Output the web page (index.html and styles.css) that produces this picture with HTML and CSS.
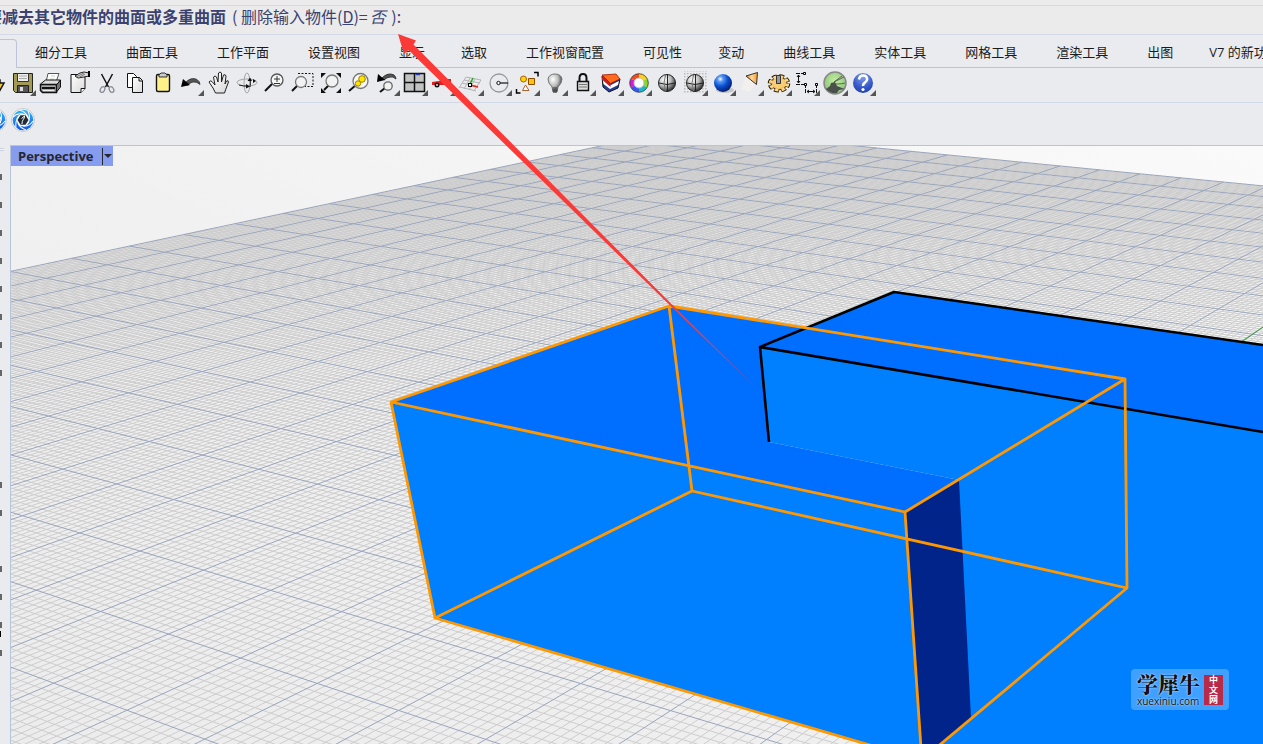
FILE: index.html
```
<!DOCTYPE html>
<html lang="zh-CN">
<head>
<meta charset="utf-8">
<title>Rhino - Perspective</title>
<link rel="stylesheet" href="styles.css">
</head>
<body>
<svg class="defs" width="0" height="0" aria-hidden="true">
  <defs>
    <radialGradient id="gray-ball" cx=".35" cy=".3" r=".75"><stop offset="0" stop-color="#fff"/><stop offset=".5" stop-color="#bdbdbd"/><stop offset="1" stop-color="#222"/></radialGradient>
    <radialGradient id="blue-ball" cx=".35" cy=".28" r=".75"><stop offset="0" stop-color="#fff"/><stop offset=".2" stop-color="#5b9bf5"/><stop offset=".55" stop-color="#0b4fd0"/><stop offset="1" stop-color="#021c66"/></radialGradient>
    <radialGradient id="help-ball" cx=".5" cy=".2" r=".9"><stop offset="0" stop-color="#7f9df0"/><stop offset=".6" stop-color="#3457c8"/><stop offset="1" stop-color="#1c3aa0"/></radialGradient>
    <radialGradient id="green-ball" cx=".5" cy=".4" r=".6"><stop offset="0" stop-color="#c3f0a0"/><stop offset="1" stop-color="#8cc27a"/></radialGradient>
    <linearGradient id="paper" x1="0" y1="0" x2="1" y2="1"><stop offset="0" stop-color="#fff"/><stop offset="1" stop-color="#d9d9d9"/></linearGradient>
    <linearGradient id="cone" x1="0" y1="0" x2="1" y2="0"><stop offset="0" stop-color="#f08a10"/><stop offset=".5" stop-color="#ffd9a0"/><stop offset="1" stop-color="#f59a20"/></linearGradient>
    <linearGradient id="swirl" x1="0" y1="0" x2="0" y2="1"><stop offset="0" stop-color="#35b8f5"/><stop offset="1" stop-color="#0b55ee"/></linearGradient>
    <linearGradient id="sky" x1="0" y1="1" x2="1" y2="0"><stop offset="0" stop-color="#ececec"/><stop offset=".5" stop-color="#f1f1f1"/><stop offset="1" stop-color="#fafafa"/></linearGradient>
    <pattern id="dots" width="3" height="3" patternUnits="userSpaceOnUse"><rect width="1.5" height="1.5" fill="#bbb"/></pattern>
    <symbol id="aperture" viewBox="0 0 24 24">
      <circle cx="12" cy="12" r="11.5" fill="#f6f6f6" stroke="#c8c8c8"/>
      <circle cx="12" cy="12" r="10.3" fill="url(#swirl)"/>
      <g stroke="#eef7ff" stroke-width="1.1" fill="none"><path d="M2 9Q6 5 12 6M8 2Q14 3 17 9M17 3Q20 9 17 15M22 13Q18 19 12 18M15 22Q9 20 7 15M5 20Q4 14 7 9"/></g>
      <circle cx="12" cy="12" r="6.3" fill="#fff"/>
      <path d="M9.500 7.300h5l3 4.700-3 4.700h-5l-3-4.700z" fill="#222b33"/>
      <path d="M11 16c-.5-4 3-5 2.500-8l-3 2.500" stroke="#fff" fill="none"/>
    </symbol>
  </defs>
</svg>

<header class="command">
  <label class="prompt" for="command-input">要减去其它物件的曲面或多重曲面</label>
  <span class="options">( <a href="#delete-input">删除输入物件(<u>D</u>)=<i>否</i></a> ):</span>
  <input class="command-input" id="command-input" type="text">
</header>

<nav class="tabs">
  <a class="tab active" href="#standard" aria-label="标准"></a>
  <a class="tab" href="#subd">细分工具</a>
  <a class="tab" href="#surface">曲面工具</a>
  <a class="tab" href="#cplane">工作平面</a>
  <a class="tab" href="#view">设置视图</a>
  <a class="tab short" href="#display">显示</a>
  <a class="tab" href="#select">选取</a>
  <a class="tab" href="#layout">工作视窗配置</a>
  <a class="tab short" href="#visibility">可见性</a>
  <a class="tab" href="#transform">变动</a>
  <a class="tab" href="#curve">曲线工具</a>
  <a class="tab" href="#solid">实体工具</a>
  <a class="tab" href="#mesh">网格工具</a>
  <a class="tab" href="#render">渲染工具</a>
  <a class="tab short" href="#drafting">出图</a>
  <a class="tab" href="#v7">V7 的新功能</a>
</nav>

<div class="toolbar" role="toolbar" aria-label="标准">
  <button class="tool" aria-label="打开"><svg viewBox="0 0 28 28"><path d="M3 7h7l2 3h7v3h4l-5 9H3z" fill="#f4c53a" stroke="#111" stroke-width="1.5"/></svg></button>
  <button class="tool menu" aria-label="保存"><svg viewBox="0 0 28 28"><path d="M4.500 3.500h19v19h-17l-2-2z" fill="#a39a55" stroke="#222"/><path d="M8.500 3.500h11v8h-11z" fill="#eee" stroke="#333"/><path d="M10 6h8M10 8.500h8" stroke="#aaa"/><path d="M8.500 15.500h11v7h-11z" fill="#555" stroke="#222"/><path d="M11 17h3v4h-3z" fill="#ddd"/></svg></button>
  <button class="tool" aria-label="打印"><svg viewBox="0 0 28 28"><path d="M9 12l2-8.500h11l-3 8.500" fill="#fff" stroke="#555"/><path d="M14 6h4M13 9h4" stroke="#ccc"/><path d="M3.500 14l5-4h15l-4 5h-16z" fill="#ddd" stroke="#111"/><path d="M3.500 14.500h16v8h-14l-2-2z" fill="#aaa" stroke="#111" stroke-width="1.500"/><path d="M19.500 15l4-5v7l-4 5z" fill="#777" stroke="#111"/><path d="M5 18h13" stroke="#111" stroke-width="2"/><path d="M6 20.500h11" stroke="#eee"/></svg></button>
  <button class="tool" aria-label="属性"><svg viewBox="0 0 28 28"><path d="M6 4.500h14v14l-4 4H6z" fill="url(#paper)" stroke="#111"/><path d="M16 22.500v-4h4" fill="#fff" stroke="#111"/><path d="M10 6l5-3 4-1 5 1v3l-5 1-6 1z" fill="#ddd" stroke="#222"/><path d="M11 7l8-4M13 8l7-4" stroke="#777"/><path d="M24 1v6" stroke="#000" stroke-width="2"/></svg></button>
  <button class="tool" aria-label="剪切"><svg viewBox="0 0 28 28"><path d="M8.500 4l7 13M19.500 4l-7 13" stroke="#111" stroke-width="1.500"/><g fill="none" stroke="#888c98" stroke-width="1.300"><ellipse cx="9.500" cy="19.500" rx="2.100" ry="3" transform="rotate(30 9.500 19.500)"/><ellipse cx="18.500" cy="19.500" rx="2.100" ry="3" transform="rotate(-30 18.500 19.500)"/></g></svg></button>
  <button class="tool" aria-label="复制"><svg viewBox="0 0 28 28"><path d="M6.500 3.500h6l3 3v11h-9z" fill="#fff" stroke="#111"/><path d="M11.500 7.500h7l3 3v12h-10z" fill="url(#paper)" stroke="#111"/><path d="M18 7.500v3.500h3.500" fill="none" stroke="#111"/></svg></button>
  <button class="tool" aria-label="粘贴"><svg viewBox="0 0 28 28"><rect x="7.500" y="4.500" width="13" height="17" rx="1.500" fill="#fff08a" stroke="#111" stroke-width="1.400"/><path d="M10 7V5l2-2h4l2 2v2z" fill="#ccc" stroke="#333"/></svg></button>
  <button class="tool menu" aria-label="撤销"><svg viewBox="0 0 28 28"><path d="M8 13Q14 6.500 20 9.500q3 2 3 5-3-3-7-2.500-3 .500-6 3.500z" fill="#555" stroke="#333" stroke-width=".8"/><path d="M4 17l2-8 7 6z" fill="#000"/></svg></button>
  <button class="tool" aria-label="平移"><svg viewBox="0 0 28 28"><path d="M10.500 23L8 18l-4-6q1-2 3-.500l3 3.500-1.500-8q1.500-2 3 0L13 12l.500-9q1.500-2 3 0V12l2-7q2-1 2.500 1l-1 8 1.500-3q2-1 2 1l-3 8-1 3z" fill="url(#paper)" stroke="#222"/></svg></button>
  <button class="tool" aria-label="旋转视图"><svg viewBox="0 0 28 28"><g fill="none" stroke="#a5a5a5"><ellipse cx="14" cy="12.500" rx="10" ry="3.500"/><ellipse cx="14" cy="13" rx="3" ry="10"/></g><path d="M6 15q5 1.500 9 1M17 9q.8 4 0 8" stroke="#222" fill="none"/><path d="M13 14l4 2.500-4 2zM14.500 11l2.500-3.500 2 3.500zM20 9l3 2-3 2z" fill="#111"/></svg></button>
  <button class="tool" aria-label="缩放"><svg viewBox="0 0 28 28"><path d="M4 21l7-7" stroke="#111" stroke-width="2"/><circle cx="16" cy="10" r="6" fill="#f7f7f7" stroke="#555" stroke-width="1.300"/><path d="M13 9h6M16 6v6M13 13.500h6" stroke="#333"/></svg></button>
  <button class="tool" aria-label="框选缩放"><svg viewBox="0 0 28 28"><path d="M9 3.500h15v13h-8" fill="none" stroke="#111" stroke-dasharray="2 1.500"/><path d="M3 21l6-6" stroke="#111" stroke-width="2"/><circle cx="12" cy="12" r="5.500" fill="#f2f2f2" stroke="#777" stroke-width="1.300"/></svg></button>
  <button class="tool" aria-label="缩放至最大范围"><svg viewBox="0 0 28 28"><path d="M4 3h5L4 8zM24 3h-5l5 5zM4 23h5l-5-5zM24 23h-5l5-5z" fill="#111"/><path d="M7 20l5-5" stroke="#111" stroke-width="2"/><circle cx="15" cy="11" r="6" fill="#f2f2f2" stroke="#777" stroke-width="1.300"/></svg></button>
  <button class="tool" aria-label="缩放选取物件"><svg viewBox="0 0 28 28"><path d="M4 21l7-6" stroke="#111" stroke-width="2"/><circle cx="15.500" cy="11" r="7.500" fill="#f7f7f7" stroke="#777" stroke-width="1.300"/><circle cx="17" cy="9" r="3.300" fill="#ffe600" stroke="#a08000"/><circle cx="13" cy="13.500" r="2.700" fill="#ffe600" stroke="#a08000"/></svg></button>
  <button class="tool menu" aria-label="撤销视图更改"><svg viewBox="0 0 28 28"><path d="M9 8q6-6 12-3 2 2 2 4-3-3-6-2-3 0-6 3z" fill="#555" stroke="#333"/><path d="M4 12l1-8 7 6z" fill="#000"/><path d="M7 22l5-4" stroke="#111" stroke-width="2"/><circle cx="15" cy="16" r="4.200" fill="#f2f2f2" stroke="#666" stroke-width="1.300"/></svg></button>
  <button class="tool menu" aria-label="四个工作视窗"><svg viewBox="0 0 28 28"><path d="M3.500 3.500h20v18h-20z" fill="#c2c2c2" stroke="#111" stroke-width="1.500"/><path d="M13.500 3v19M3 12.500h21" stroke="#111" stroke-width="1.500"/><path d="M15 4.500h4" stroke="#2340c8" stroke-width="1.500"/></svg></button>
  <button class="tool menu" aria-label="右视图"><svg viewBox="0 0 28 28"><path d="M3 15v-3l7-1 4-2h8v6z" fill="#e02020"/><circle cx="8" cy="15" r="2.500" fill="#111"/><circle cx="8" cy="15" r="1" fill="#ddd"/></svg></button>
  <button class="tool menu" aria-label="工作平面"><svg viewBox="0 0 28 28"><g stroke="#b5b5b5" fill="none"><path d="M9 7l15 3M7 10l16 3M5 13l16 4M3 17l16 4M9 7L2 18M13 8L7 19M18 9l-6 11M24 10l-7 11"/></g><path d="M13 15l8 2" stroke="#d22" stroke-width="1.500"/><path d="M13 14l3-6" stroke="#2a2" stroke-width="1.500"/><rect x="11.500" y="13.500" width="3" height="3" fill="#fff" stroke="#000"/></svg></button>
  <button class="tool menu" aria-label="圆"><svg viewBox="0 0 28 28"><circle cx="14" cy="13" r="9" fill="none" stroke="#999" stroke-width="1.300"/><path d="M14 13h9" stroke="#111" stroke-width="1.200"/><circle cx="13.500" cy="13" r="1.700" fill="#fff" stroke="#111"/></svg></button>
  <button class="tool menu" aria-label="选取"><svg viewBox="0 0 28 28"><circle cx="10.500" cy="9" r="3" fill="#ffd800" stroke="#b05a00"/><path d="M15.500 8.500h6v6h-6z" fill="#ffc400" stroke="#8a4a00"/><path d="M9.500 20.500l3-5.500 3.500 5.500z" fill="#fff" stroke="#b0602a"/><path d="M21 2.500h4v4M3.500 19v4h4" fill="none" stroke="#000" stroke-width="1.500"/></svg></button>
  <button class="tool menu" aria-label="隐藏物件"><svg viewBox="0 0 28 28"><path d="M11 17q-4-4-4-8 1-5 7-5t7 5q0 4-4 8l-1 5h-4z" fill="url(#gray-ball)" stroke="#777"/><path d="M11.500 18h5M11.500 20h5M12 22h4" stroke="#444"/></svg></button>
  <button class="tool menu" aria-label="锁定物件"><svg viewBox="0 0 28 28"><path d="M10.500 12V8q0-4 3.500-4t3.500 4v4" fill="none" stroke="#111" stroke-width="2"/><path d="M8.500 11.500h11v9h-11z" fill="#ddd" stroke="#111" stroke-width="1.400"/><path d="M10 14.500h8M10 17h8" stroke="#777"/></svg></button>
  <button class="tool menu" aria-label="图层"><svg viewBox="0 0 28 28"><path d="M5 6l9 7 9-4-2 9-9 4-6-5z" fill="#243f9a" stroke="#111"/><path d="M5.500 8l7.500 7.500 9-4.500-1 4-8 4-6.500-5z" fill="#fff"/><path d="M5 5l14-1 4 5-9.500 4.500z" fill="#ff6a1c" stroke="#a01800" stroke-width=".8"/><path d="M5 5l8.500 8.500V17l-8-7z" fill="#c81e1e"/></svg></button>
  <button class="tool menu" aria-label="颜色"><svg viewBox="0 0 28 28"><g fill="none" stroke-width="4.500"><path d="M14 6A7 7 0 0 1 20 9.500" stroke="#ffd21a"/><path d="M20 9.500A7 7 0 0 1 20 16.500" stroke="#8ad82a"/><path d="M20 16.500A7 7 0 0 1 14 20" stroke="#19b8c8"/><path d="M14 20A7 7 0 0 1 8 16.500" stroke="#3458f0"/><path d="M8 16.500A7 7 0 0 1 8 9.500" stroke="#d81adb"/><path d="M8 9.500A7 7 0 0 1 14 6" stroke="#f54a1a"/></g><circle cx="14" cy="13" r="9.300" fill="none" stroke="#333" stroke-width=".8"/><circle cx="14" cy="13" r="5" fill="#fff" stroke="#bbb"/></svg></button>
  <button class="tool" aria-label="着色"><svg viewBox="0 0 28 28"><circle cx="14" cy="13" r="8.500" fill="url(#gray-ball)" stroke="#222"/><path d="M6 13q8 3 16 0M14.500 4.500v17" fill="none" stroke="#222"/><path d="M12.500 5q-3 8 0 16" fill="none" stroke="#777"/></svg></button>
  <button class="tool menu" aria-label="着色选取物件"><svg viewBox="0 0 28 28"><path d="M2 1h24v23H2z" fill="url(#dots)"/><circle cx="14" cy="13" r="8.500" fill="url(#gray-ball)" stroke="#222"/><path d="M6 13q8 3 16 0M14.500 4.500v17" fill="none" stroke="#222"/><path d="M12.500 5q-3 8 0 16" fill="none" stroke="#777"/></svg></button>
  <button class="tool menu" aria-label="渲染"><svg viewBox="0 0 28 28"><ellipse cx="16" cy="20" rx="9" ry="3" fill="#c4c4c6"/><circle cx="14" cy="13" r="9" fill="url(#blue-ball)"/></svg></button>
  <button class="tool menu" aria-label="灯光"><svg viewBox="0 0 28 28"><path d="M9 6l10 8-7 8-8-3z" fill="#f1f0ee"/><path d="M9 6l11.500-3.500-1 12z" fill="url(#cone)" stroke="#333"/></svg></button>
  <button class="tool menu" aria-label="选项"><svg viewBox="0 0 28 28"><g transform="translate(0 3) scale(1 .8)"><circle cx="14" cy="13" r="8.800" fill="none" stroke="#2a1b00" stroke-width="5" stroke-dasharray="4.600 2.310"/><circle cx="14" cy="13" r="8" fill="#f3bd55" stroke="#2a1b00"/><circle cx="14" cy="13" r="8.500" fill="none" stroke="#ffd98a" stroke-width="3.400" stroke-dasharray="3.400 3.276" stroke-dashoffset="-.5"/><circle cx="14" cy="13" r="6" fill="#f8cf78"/></g><path d="M11.500 5.500h4v8h-4z" fill="#999" stroke="#333"/></svg></button>
  <button class="tool menu" aria-label="尺寸标注"><svg viewBox="0 0 28 28"><path d="M3 3.500h9M3 14.500h9M12.500 14v9M23.500 14v9" stroke="#111" stroke-dasharray="4 1"/><path d="M5.500 5v8M4 7l1.500-2L7 7M4 11l1.500 2L7 11M14 21.500h8M16 20l-2 1.500 2 1.500M20 20l2 1.500-2 1.500" fill="none" stroke="#111"/><g fill="#fff" stroke="#000"><path d="M10.500 2.500h2v2h-2zM11.500 13.500h2v2h-2zM22.500 13.500h2v2h-2z"/></g></svg></button>
  <button class="tool menu" aria-label="Grasshopper"><svg viewBox="0 0 28 28"><circle cx="14" cy="13" r="11" fill="url(#green-ball)" stroke="#888" stroke-width="1.500"/><path d="M5 19l4-3 1-3 4-1 2 4 5 2 3 1-6 1-2 3q-7 1-11-4z" fill="#4a504a"/><path d="M13 12l10-5M15 14q6 0 9-1M13 12l8-6" stroke="#555" stroke-width=".9" fill="none"/></svg></button>
  <button class="tool menu" aria-label="帮助"><svg viewBox="0 0 28 28"><circle cx="14" cy="13" r="10" fill="url(#help-ball)"/><path d="M10 9.500q.5-4 4.200-4t4 3.500q0 2-2.200 3.500t-1.800 3.500" fill="none" stroke="#fff" stroke-width="2.600"/><circle cx="14" cy="19.500" r="1.600" fill="#fff"/></svg></button>
</div>

<div class="plugins" role="toolbar" aria-label="插件">
  <button class="plugin" aria-label="插件面板"><svg><use href="#aperture"/></svg></button>
  <button class="plugin" aria-label="插件设置"><svg><use href="#aperture"/></svg></button>
</div>

<main class="workspace">
  <aside class="sidebar" aria-label="建模工具">
    <span class="grip"></span>
    <span class="slot"></span><span class="slot"></span><span class="slot"></span><span class="slot"></span>
    <span class="slot"></span><span class="slot"></span><span class="slot"></span><span class="slot"></span>
    <span class="slot empty"></span><span class="slot empty"></span><span class="slot empty"></span>
    <span class="slot"></span><span class="slot"></span><span class="slot empty"></span>
    <span class="slot"></span><span class="slot"></span><span class="slot cursor"></span><span class="slot"></span>
  </aside>
  <section class="viewport">
    <svg class="scene" viewBox="11 146 1252 598" preserveAspectRatio="xMinYMin slice" role="img" aria-label="Perspective">
      <path fill="url(#sky)" d="M11 146H1263V744H11z"/>
      <path id="grid-minor" class="grid-minor"/>
      <path id="grid-major" class="grid-major"/>
      <path class="axis" d="M1238 344.500L1263 327"/>
      <path class="face-front" d="M391 402L905 512L1125 379L1263 345V744H868L435 618z"/>
      <path class="face-top" d="M391 402L669 306L805 328L893 292L1263 345V432L760 347L769 442L959 480L905 512z"/>
      <path class="face-front" d="M760 347L1263 432V520L959 480L769 442z"/>
      <path class="face-side" d="M905 512L959 480L971 718L940 746H921z"/>
      <path class="edge" d="M769 442L760 347L894 292L1263 345M760 347L1263 432"/>
      <path class="selected" d="M391 402L669 306L1125 379L905 512zM391 402L435 618L692 491L669 306M692 491L1127 588L1125 379M905 512L921 748M435 618L880 748M1127 588L936 748"/>
    </svg>
    <button class="view-title">Perspective<span class="arrow"></span></button>
    <div class="watermark">
      <div class="brand"><strong>学犀牛</strong><span>xuexiniu.com</span></div>
      <div class="seal">中文网</div>
    </div>
  </section>
</main>

<svg class="pointer" viewBox="0 0 1263 744" preserveAspectRatio="xMinYMin slice" aria-hidden="true">
  <path d="M398 34L416 40.500L413.500 44.500L668 300.500L752 384L666 301.500L408.500 50L404 54z" fill="#fb3a38"/>
</svg>
<script src="grid.js"></script>
</body>
</html>
```

FILE: styles.css
```
* { box-sizing: border-box; }
body {
  margin: 0;
  height: 100vh;
  display: flex;
  flex-direction: column;
  position: relative;
  overflow: hidden;
  background: #eaebef;
  color: #1b1b1b;
  font-family: "Open Sans", "Noto Sans CJK SC", sans-serif;
  font-size: 13px;
}
a { color: inherit; text-decoration: none; }
button { border: 0; padding: 0; background: none; font: inherit; color: inherit; }
.defs { position: absolute; }

.command {
  display: flex;
  align-items: center;
  height: 35px;
  flex: none;
  margin-left: -14px;
  padding-bottom: 2px;
  border-bottom: 1px solid #d3d9e6;
  background: linear-gradient(#ebebeb 5px, #d3d9e6 5px, #d3d9e6 6px, #ebebeb 6px);
  color: #3b4270;
  font-family: "Noto Sans CJK SC", sans-serif;
  font-size: 16px;
  line-height: 28px;
  white-space: nowrap;
}
.prompt { font-weight: 700; }
.options { margin-left: 6px; }
.options i { margin: 0 2px; }
.command-input { flex: 1; min-width: 0; border: 0; outline: 0; background: none; font: inherit; color: inherit; }

.tabs {
  display: flex;
  height: 33px;
  flex: none;
  overflow: hidden;
  line-height: 28px;
  white-space: nowrap;
}
.tab { flex: none; padding: 3px 20px 0 19px; border-bottom: 1px solid #bcc4d8; }
.tab.short { padding-right: 17px; }
.tab:last-child { flex: 1 0 auto; }
.tab.active {
  width: 17px;
  margin-right: -1px;
  padding: 0;
  margin-top: 4px;
  border: 1px solid #bcc4d8;
  border-width: 1px 1px 0 0;
  border-top-right-radius: 4px;
}

.toolbar {
  display: flex;
  height: 35px;
  flex: none;
  margin-left: -19px;
  padding-top: 2px;
  border-bottom: 1px solid #d3d9e6;
}
.tool { position: relative; flex: none; width: 28px; height: 28px; }
.tool svg { display: block; width: 28px; height: 28px; }
.tool.menu::after {
  content: "";
  position: absolute;
  right: 1px;
  bottom: 2px;
  border: 3px solid transparent;
  border-right-color: #555;
  border-bottom-color: #555;
}

.plugins { display: flex; gap: 4px; height: 42px; flex: none; margin-left: -17px; padding-top: 5px; }
.plugin { width: 24px; height: 24px; }
.plugin svg { display: block; width: 24px; height: 24px; }

.workspace { display: flex; flex: 1; min-height: 0; }
.sidebar { flex: none; width: 10px; overflow: hidden; }
.grip { display: block; width: 4px; height: 18px; margin-top: 3px; border-top: 1px solid #c9d1e2; box-shadow: inset 0 1px #f4f6fa, inset 0 2px #c9d1e2; }
.slot { display: block; height: 28px; padding-top: 8px; }
.slot::before { content: ""; display: block; width: 2px; height: 6px; background: #666; }
.slot.empty::before { background: none; }
.slot.cursor::after { content: ""; display: block; width: 1px; height: 6px; margin-top: 3px; background: #000; }

.viewport {
  position: relative;
  flex: 1;
  min-width: 0;
  overflow: hidden;
  border-top: 1px solid #b9c4da;
  border-left: 1px solid #b9c4da;
}
.scene { display: block; width: 100%; height: 100%; }
.grid-minor { fill: none; stroke: #cdcdcd; stroke-width: 1; }
.grid-major { fill: none; stroke: #9aa5bb; stroke-width: 1; }
.axis { fill: none; stroke: #3a9a3a; stroke-width: 1; }
.face-front { fill: #0080ff; }
.face-top { fill: #006fff; }
.face-side { fill: #00248a; }
.edge { fill: none; stroke: #000; stroke-width: 2.6; stroke-linejoin: round; }
.selected { fill: none; stroke: #ff9800; stroke-width: 2.8; stroke-linejoin: round; }

.view-title {
  position: absolute;
  left: 0;
  top: 0;
  display: flex;
  align-items: center;
  height: 20px;
  padding-left: 7px;
  background: #869cee;
  color: #26262e;
  font: 700 13px/20px "Open Sans", "Noto Sans", sans-serif;
}
.arrow { display: flex; justify-content: center; align-items: center; width: 11px; height: 17px; margin-left: 8px; border-left: 1px solid #26262e; }
.arrow::before { content: ""; border: 4px solid transparent; border-top-color: #26262e; border-bottom: 0; }

.watermark {
  position: absolute;
  right: 34px;
  bottom: 34px;
  display: flex;
  align-items: center;
  gap: 4px;
  height: 41px;
  padding: 0 6px;
  border-radius: 4px;
  background: rgba(255, 255, 255, .25);
  color: #111;
}
.brand { display: flex; flex-direction: column; font: 10px/12px "Open Sans", sans-serif; }
.brand strong { font: 900 21px/23px "Noto Serif CJK SC", "Noto Sans CJK SC", serif; text-shadow: 0 0 2px #fff; }
.brand span { text-shadow: 0 0 2px #fff; }
.seal { width: 19px; padding: 0 5px; background: #b82a4a; color: #fff; font: 700 9px/10px "Noto Sans CJK SC", sans-serif; overflow-wrap: anywhere; text-align: center; }

.pointer { position: absolute; left: 0; top: 0; width: 100%; height: 100%; pointer-events: none; }
```

FILE: grid.js
```
// Camera projection of the construction plane (u, v in major grid cells).
const H = [55.236077, 100.21043, 22.553241, 3.8811715, -7.5982726, 515.7609, -0.025008883, 0.050030569];
const U = [-11, 14];
const V = [-6, 22];
const SUBDIVISIONS = 10;

function project(u, v) {
  const w = H[6] * u + H[7] * v + 1;
  const x = (H[0] * u + H[1] * v + H[2]) / w;
  const y = (H[3] * u + H[4] * v + H[5]) / w;
  return x.toFixed(1) + ' ' + y.toFixed(1);
}

function lines(major) {
  const parts = [];
  for (let i = U[0] * SUBDIVISIONS; i <= U[1] * SUBDIVISIONS; i++) {
    if ((i % SUBDIVISIONS === 0) !== major) continue;
    const u = i / SUBDIVISIONS;
    parts.push('M' + project(u, V[0]) + 'L' + project(u, V[1]));
  }
  for (let i = V[0] * SUBDIVISIONS; i <= V[1] * SUBDIVISIONS; i++) {
    if ((i % SUBDIVISIONS === 0) !== major) continue;
    const v = i / SUBDIVISIONS;
    parts.push('M' + project(U[0], v) + 'L' + project(U[1], v));
  }
  return parts.join('');
}

document.getElementById('grid-minor').setAttribute('d', lines(false));
document.getElementById('grid-major').setAttribute('d', lines(true));
```
